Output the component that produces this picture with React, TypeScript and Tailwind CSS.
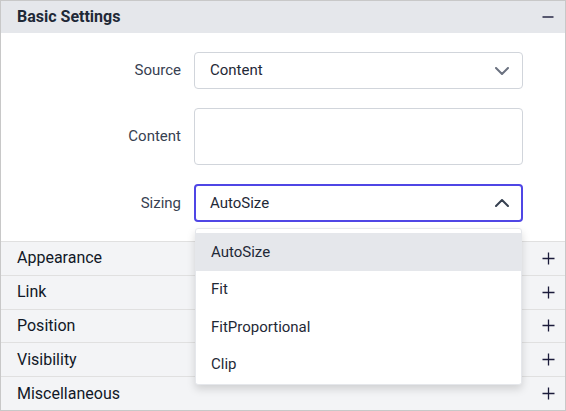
import React from "react";

const ChevronDown = ({ color }: { color: string }) => (
  <svg width="14" height="8" viewBox="0 0 14 8" fill="none">
    <path d="M1 1L7 7L13 1" stroke={color} strokeWidth="2" strokeLinecap="round" strokeLinejoin="round" />
  </svg>
);

const ChevronUp = ({ color }: { color: string }) => (
  <svg width="14" height="8" viewBox="0 0 14 8" fill="none">
    <path d="M1 7L7 1L13 7" stroke={color} strokeWidth="2" strokeLinecap="round" strokeLinejoin="round" />
  </svg>
);

const Plus = () => (
  <svg width="13" height="13" viewBox="0 0 13 13" fill="none">
    <path d="M6.5 0.5V12.5M0.5 6.5H12.5" stroke="#1b1b3a" strokeWidth="1.3" />
  </svg>
);

const Minus = () => (
  <svg width="12" height="2" viewBox="0 0 12 2" fill="none">
    <path d="M0.5 1H11.5" stroke="#1b1b3a" strokeWidth="1.4" />
  </svg>
);

export default function App() {
  const sections = ["Appearance", "Link", "Position", "Visibility", "Miscellaneous"];
  const items = ["AutoSize", "Fit", "FitProportional", "Clip"];
  return (
    <div className="relative w-[566px] h-[411px] border border-[#c8c8c8] bg-white font-['Roboto',sans-serif] text-[#1f2937] overflow-hidden flex flex-col">
      <div className="h-[32px] shrink-0 bg-[#e5e7eb] pl-[16px] pr-[11px] flex items-center justify-between">
        <span className="text-[16px] font-bold">Basic Settings</span>
        <Minus />
      </div>
      <div className="h-[208px] shrink-0 flex flex-col gap-[19px] pt-[19px] pr-[42px]">
        <div className="grid grid-cols-[180px_1fr] gap-x-[13px] items-center">
          <span className="text-right text-[15px] text-[#374151]">Source</span>
          <div className="h-[37px] border border-[#d1d5db] rounded-[4px] pl-[15px] pr-[13px] flex items-center justify-between">
            <span className="text-[15px]">Content</span>
            <ChevronDown color="#6b7280" />
          </div>
        </div>
        <div className="grid grid-cols-[180px_1fr] gap-x-[13px] items-center">
          <span className="text-right text-[15px] text-[#374151]">Content</span>
          <div className="h-[57px] border border-[#d1d5db] rounded-[4px]" />
        </div>
        <div className="grid grid-cols-[180px_1fr] gap-x-[13px] items-center">
          <span className="text-right text-[15px] text-[#374151]">Sizing</span>
          <div className="h-[38px] border-2 border-[#4f46e5] rounded-[4px] pl-[14px] pr-[12px] flex items-center justify-between">
            <span className="text-[15px]">AutoSize</span>
            <ChevronUp color="#374151" />
          </div>
        </div>
      </div>
      {sections.map((s) => (
        <div
          key={s}
          className="flex-1 min-h-0 border-t border-[#e0e0e0] bg-[#f3f4f6] pl-[16px] pr-[10px] flex items-center justify-between"
        >
          <span className="text-[16px] text-[#111827]">{s}</span>
          <Plus />
        </div>
      ))}
      <div className="absolute left-[194px] top-[227px] w-[327px] bg-white border border-[#e5e7eb] rounded-[3px] shadow-[0_4px_8px_rgba(0,0,0,0.15)] pt-[4px] pb-[1px]">
        {items.map((it, i) => (
          <div
            key={it}
            className={`h-[37.6px] pl-[15px] flex items-center text-[15px] ${i === 0 ? "bg-[#e5e7eb]" : "bg-white"}`}
          >
            {it}
          </div>
        ))}
      </div>
    </div>
  );
}
